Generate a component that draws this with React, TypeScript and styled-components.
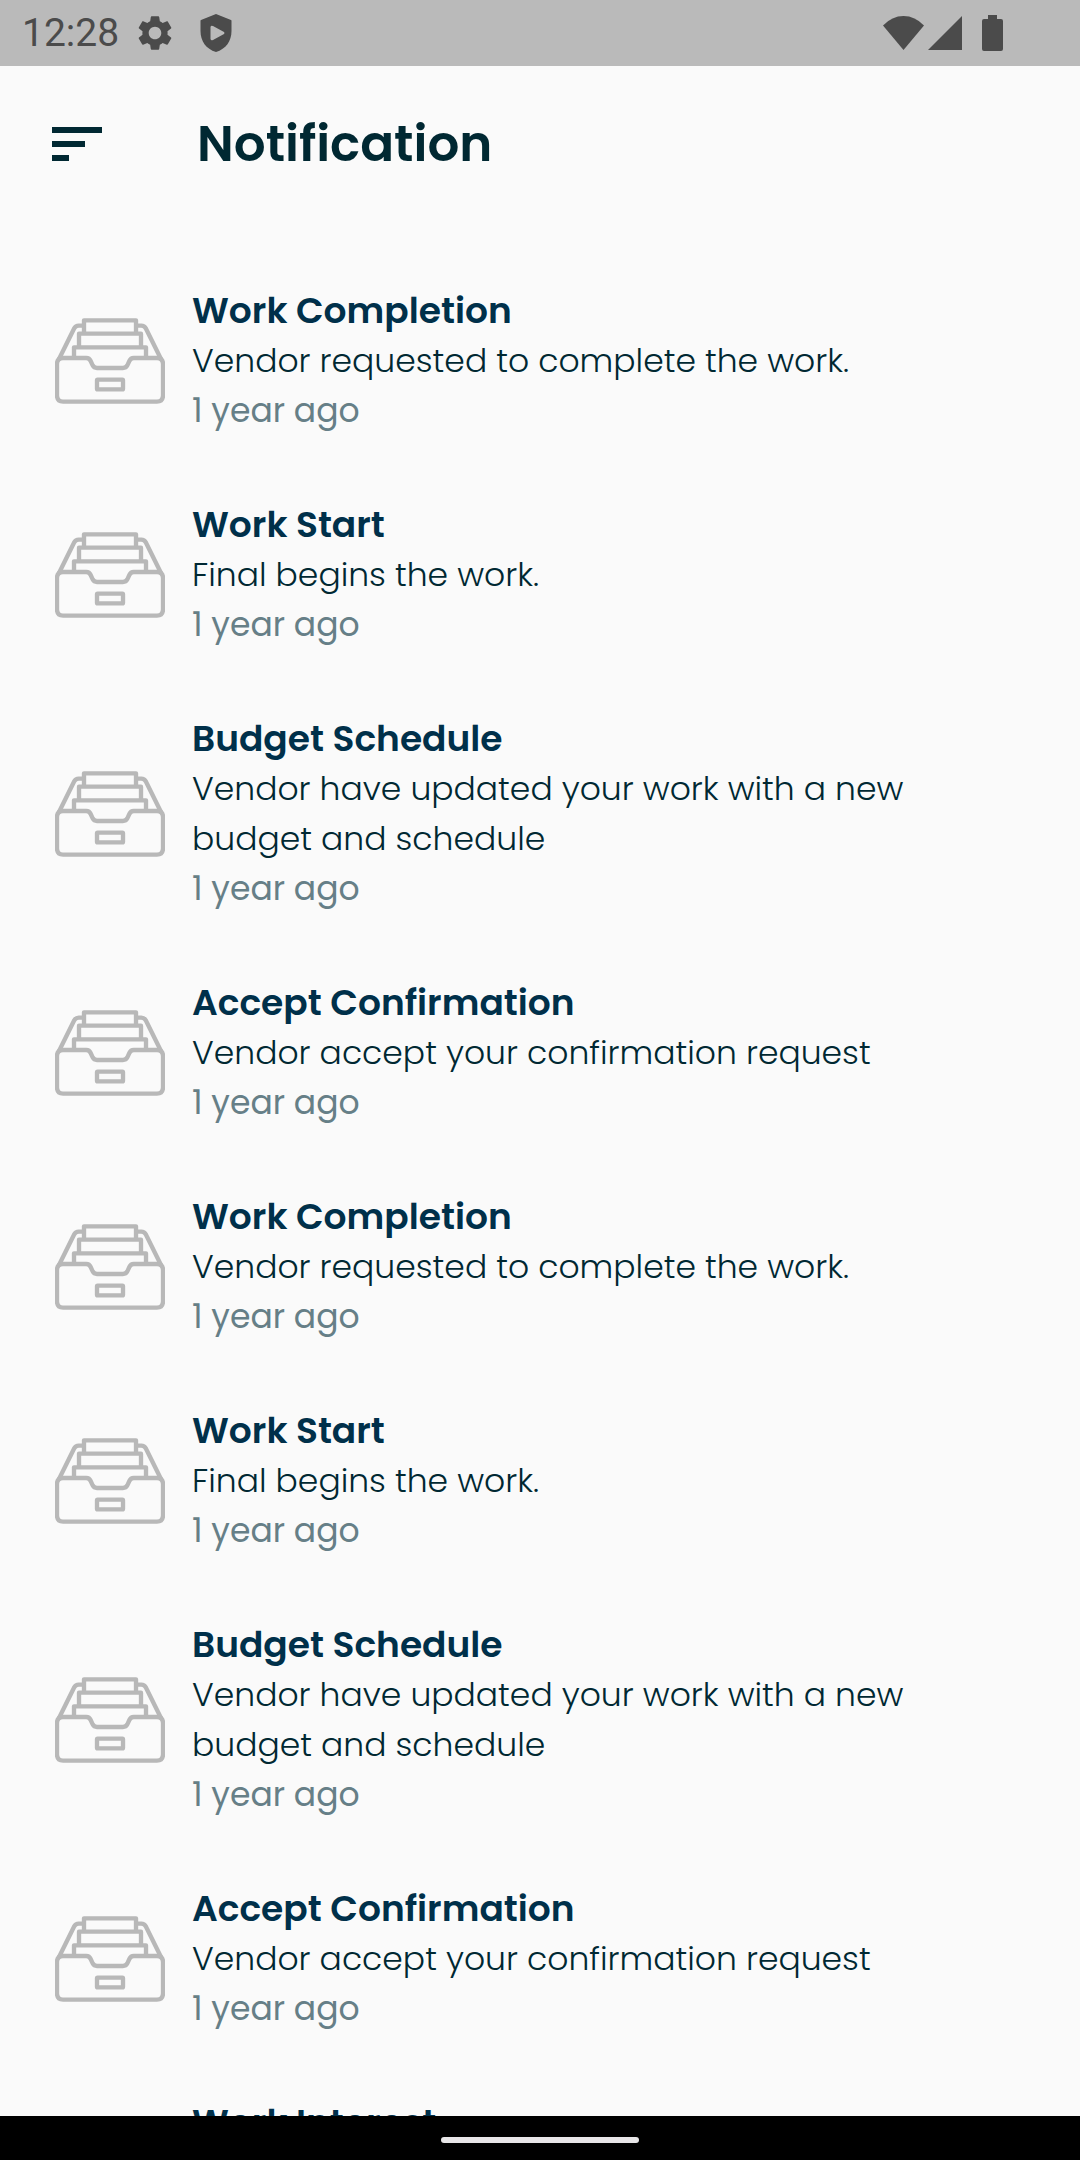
import React from "react";
import styled, { createGlobalStyle } from "styled-components";

const GlobalStyle = createGlobalStyle`
  * { box-sizing: border-box; }
  body { margin: 0; background: #fafafa; }
`;

const Screen = styled.div`
  display: flex;
  flex-direction: column;
  height: 100vh;
  background: #fafafa;
  color: #002832;
  font-family: Poppins, Inter, "Open Sans", sans-serif;
`;

const StatusBar = styled.div`
  display: flex;
  flex: none;
  align-items: center;
  justify-content: space-between;
  height: 66px;
  padding: 0 77px 0 22px;
  background: #bababa;
  color: #4b4b4b;
`;

const StatusGroup = styled.div<{ $gap: number }>`
  display: flex;
  align-items: center;
  gap: ${(p) => p.$gap}px;
`;

const Clock = styled.time`
  font: 400 39px/48px Roboto, sans-serif;
`;

const Icon = styled.svg`
  display: block;
  flex: none;
  fill: currentColor;
`;

const AppBar = styled.header`
  display: flex;
  flex: none;
  align-items: center;
  height: 156px;
  padding: 0 52px;
  gap: 95px;
`;

const MenuButton = styled.button`
  padding: 0;
  border: 0;
  background: none;
  color: inherit;
  cursor: pointer;
`;

const PageTitle = styled.h1`
  margin: 0;
  font-size: 50px;
  font-weight: 600;
  line-height: 64px;
`;

const List = styled.ul`
  flex: 1;
  min-height: 0;
  margin: 0;
  padding: 32px 55px;
  overflow-y: auto;
  scrollbar-width: none;
  list-style: none;
`;

const Item = styled.li`
  display: flex;
  align-items: center;
  gap: 27px;
  padding: 32px 0;
`;

const TrayIcon = styled.svg`
  display: block;
  flex: none;
  width: 110px;
  height: 86px;
  fill: none;
  stroke: #b8b8b8;
  stroke-width: 13;
  stroke-linejoin: round;
`;

const ItemText = styled.div`
  flex: 1;
  min-width: 0;
  padding-right: 100px;
`;

const ItemTitle = styled.h2`
  margin: 0;
  color: #00304a;
  font-size: 36px;
  font-weight: 600;
  line-height: 50px;
`;

const Message = styled.p`
  margin: 0;
  font-size: 33px;
  font-weight: 300;
  line-height: 50px;
`;

const Age = styled.p`
  margin: 0;
  color: #667f87;
  font-size: 33px;
  font-weight: 400;
  line-height: 50px;
`;

const NavBar = styled.div`
  display: flex;
  flex: none;
  align-items: center;
  justify-content: center;
  height: 44px;
  padding-top: 4px;
  background: #000;
`;

const HomeHandle = styled.div`
  width: 198px;
  height: 6px;
  border-radius: 3px;
  background: #e8e6e8;
`;

const Tray = () => (
  <TrayIcon viewBox="0 0 330 256" aria-hidden="true">
    <path d="M24 119H94Q103 119 107 128L113 141Q117 149 126 149H204Q213 149 217 141L223 128Q227 119 236 119H306Q324 119 324 137V231Q324 250 306 250H24Q6 250 6 231V137Q6 119 24 119Z" />
    <path d="M12 122L57 31Q62 22 71 22H84M318 122L273 31Q268 22 259 22H246" />
    <path d="M87 44V6H243V44" />
    <path d="M72 86V46H258V86" />
    <path d="M57 116V87H273V116" />
    <rect x="126" y="184" width="78" height="29" rx="2" />
  </TrayIcon>
);

const cycle = [
  { title: "Work Completion", message: "Vendor requested to complete the work." },
  { title: "Work Start", message: "Final begins the work." },
  {
    title: "Budget Schedule",
    message: "Vendor have updated your work with a new budget and schedule",
  },
  { title: "Accept Confirmation", message: "Vendor accept your confirmation request" },
];

const notifications = [
  ...cycle,
  ...cycle,
  {
    title: "Work Interest",
    message: "Vendor have shown interest in your work and sent a request",
  },
];

export default function App() {
  return (
    <Screen>
      <GlobalStyle />
      <StatusBar>
        <StatusGroup $gap={15}>
          <Clock>12:28</Clock>
          <StatusGroup $gap={19}>
            <Icon width="42" height="42" viewBox="0 0 24 24" aria-hidden="true">
              <path d="M19.14 12.94c.04-.3.06-.61.06-.94 0-.32-.02-.64-.07-.94l2.03-1.58c.18-.14.23-.41.12-.61l-1.92-3.32c-.12-.22-.37-.29-.59-.22l-2.39.96c-.5-.38-1.03-.7-1.62-.94l-.36-2.54c-.04-.24-.24-.41-.48-.41h-3.84c-.24 0-.43.17-.47.41l-.36 2.54c-.59.24-1.13.57-1.62.94l-2.39-.96c-.22-.08-.47 0-.59.22L2.74 8.87c-.12.21-.08.47.12.61l2.03 1.58c-.05.3-.09.63-.09.94s.02.64.07.94l-2.03 1.58c-.18.14-.23.41-.12.61l1.92 3.32c.12.22.37.29.59.22l2.39-.96c.5.38 1.03.7 1.62.94l.36 2.54c.05.24.24.41.48.41h3.84c.24 0 .44-.17.47-.41l.36-2.54c.59-.24 1.13-.56 1.62-.94l2.39.96c.22.08.47 0 .59-.22l1.92-3.32c.12-.22.07-.47-.12-.61l-2.01-1.58zM12 15.6c-1.98 0-3.6-1.62-3.6-3.6s1.62-3.6 3.6-3.6 3.6 1.62 3.6 3.6-1.62 3.6-3.6 3.6z" />
            </Icon>
            <Icon width="42" height="42" viewBox="0 0 42 42" aria-hidden="true">
              <path
                fillRule="evenodd"
                d="M21 2L36 8Q36.500 8 36.500 9V19C36.500 29 31 37 21 40C11 37 5.500 29 5.500 19V9Q5.500 8 6 8ZM15.500 15V27Q16 29 18 28L29 22Q30 21 29 20L18 14Q16 13 15.500 15Z"
              />
            </Icon>
          </StatusGroup>
        </StatusGroup>
        <StatusGroup $gap={20}>
          <StatusGroup $gap={4}>
            <Icon width="41" height="34" viewBox="0 0 41 34" aria-hidden="true">
              <path d="M0 9.500Q9 0 20.500 0T41 9.500L20.500 34Z" />
            </Icon>
            <Icon width="34" height="34" viewBox="0 0 34 34" aria-hidden="true">
              <path d="M34 0V34H0Z" />
            </Icon>
          </StatusGroup>
          <Icon width="21" height="36" viewBox="0 0 21 36" aria-hidden="true">
            <path d="M6 0H15V4H19Q21 4 21 6V34Q21 36 19 36H2Q0 36 0 34V6Q0 4 2 4H6Z" />
          </Icon>
        </StatusGroup>
      </StatusBar>
      <AppBar>
        <MenuButton type="button" aria-label="Open menu">
          <Icon width="50" height="34" viewBox="0 0 50 34" aria-hidden="true">
            <path d="M0 0H50V6H0ZM0 14H33V20H0ZM0 28H17V34H0Z" />
          </Icon>
        </MenuButton>
        <PageTitle>Notification</PageTitle>
      </AppBar>
      <List>
        {notifications.map((n, i) => (
          <Item key={i}>
            <Tray />
            <ItemText>
              <ItemTitle>{n.title}</ItemTitle>
              <Message>{n.message}</Message>
              <Age>1 year ago</Age>
            </ItemText>
          </Item>
        ))}
      </List>
      <NavBar>
        <HomeHandle />
      </NavBar>
    </Screen>
  );
}
